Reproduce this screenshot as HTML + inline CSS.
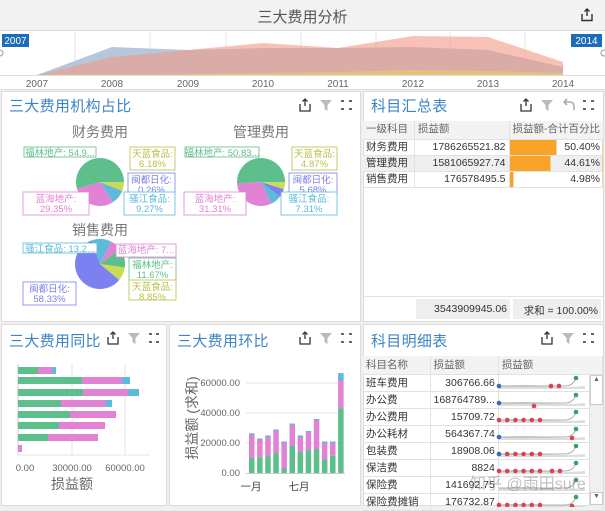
<!DOCTYPE html>
<html><head><meta charset="utf-8">
<style>
*{margin:0;padding:0;box-sizing:border-box}
body{width:605px;height:507px;overflow:hidden;background:#f0f0f0;font-family:"Liberation Sans","Noto Sans CJK SC",sans-serif;position:relative;color:#444}
.abs{position:absolute}
.panel{position:absolute;background:#fff;border:1px solid #dcdcdc}
.ttl{position:absolute;left:7px;top:3px;font-size:15px;color:#3d84c6;letter-spacing:0.3px;white-space:nowrap}
.tb{border-collapse:collapse;font-size:10.5px;position:absolute}
.tb td{height:16px;line-height:15px;border-bottom:1px solid #e2e2e2;border-right:1px solid #e2e2e2;padding:0 3px;white-space:nowrap;color:#333}
.tb.d td{height:17px;line-height:16px}
.tb tr.h td{background:#f3f3f3;color:#666;height:18px}
.r{text-align:right}
</style></head><body>
<div class="abs" style="left:0;top:0;width:605px;height:31px;background:#f2f2f2;border-bottom:1px solid #ddd"></div>
<div class="abs" style="left:0;top:6px;width:605px;text-align:center;font-size:15px;color:#555">三大费用分析</div>
<svg class="abs" style="left:580px;top:8px" width="14" height="14" viewBox="0 0 14 14"><path d="M7 1V8M4.5 3.5L7 1L9.5 3.5M2 6V12.5H12V6" fill="none" stroke="#333" stroke-width="1.4"/></svg>
<svg class="abs" style="left:0;top:31px" width="605" height="59" viewBox="0 31 605 59">
<rect x="0" y="31" width="605" height="59" fill="#fff"/>
<g stroke="#e6e6e6" stroke-width="1"><line x1="75" y1="32" x2="75" y2="75"/><line x1="150" y1="32" x2="150" y2="75"/><line x1="226" y1="32" x2="226" y2="75"/><line x1="301" y1="32" x2="301" y2="75"/><line x1="376" y1="32" x2="376" y2="75"/><line x1="450" y1="32" x2="450" y2="75"/><line x1="525" y1="32" x2="525" y2="75"/></g>
<polygon points="37,75 112,47 188,50 263,48 338,48 413,47 488,50 563,67 563,75" fill="#a9bdd6" opacity="0.85"/>
<polygon points="37,75 112,57 188,50 263,43 338,48 413,36 488,37 563,62 563,75" fill="#f29a84" opacity="0.6"/>
<polygon points="37,75 188,74 338,72 413,70 488,71 563,73 563,75" fill="#e5c870" opacity="0.8"/>
<line x1="0" y1="75.5" x2="605" y2="75.5" stroke="#ddd"/>
<line x1="0" y1="89.5" x2="605" y2="89.5" stroke="#ddd"/>
<circle cx="0" cy="53" r="3" fill="#fff" stroke="#999"/><circle cx="604" cy="53" r="3" fill="#fff" stroke="#999"/>
<g font-size="10" fill="#666" text-anchor="middle"><text x="37" y="87">2007</text><text x="112" y="87">2008</text><text x="188" y="87">2009</text><text x="263" y="87">2010</text><text x="338" y="87">2011</text><text x="413" y="87">2012</text><text x="488" y="87">2013</text><text x="563" y="87">2014</text></g>
<rect x="2" y="34" width="27" height="13" fill="#1d6cb8"/><text x="15.5" y="44" font-size="10" fill="#fff" text-anchor="middle">2007</text>
<rect x="571" y="34" width="31" height="13" fill="#1d6cb8"/><text x="586.5" y="44" font-size="10" fill="#fff" text-anchor="middle">2014</text>
</svg>

<div class="panel" style="left:1px;top:91px;width:360px;height:231px">
<div class="ttl">三大费用机构占比</div>
</div>
<svg class="abs" style="left:0;top:90px" width="362" height="232" viewBox="0 90 362 232" font-family="Liberation Sans,Noto Sans CJK SC,sans-serif">
<g fill="none" stroke="#333" stroke-width="1.3"><path d="M305 99V106M302.5 101.5L305 99L307.5 101.5M300 104V111H310V104"/></g>
<path d="M320 100H332L327.5 105V111L324.5 109V105Z" fill="#bbb"/>
<g fill="#666"><rect x="341" y="100" width="3" height="2"/><rect x="349" y="100" width="3" height="2"/><rect x="341" y="108" width="3" height="2"/><rect x="349" y="108" width="3" height="2"/></g>
<g font-size="14" fill="#777" text-anchor="middle"><text x="100" y="137">财务费用</text><text x="261" y="137">管理费用</text><text x="100" y="235">销售费用</text></g>
<g id="pies"></g>
<g font-size="9.5" text-anchor="middle" id="labels"></g>
</svg>

<div class="panel" style="left:363px;top:91px;width:241px;height:231px">
<div class="ttl">科目汇总表</div>
</div>
<svg class="abs" style="left:510px;top:96px" width="95" height="20" viewBox="510 96 95 20">
<path d="M526 99V106M523.5 101.5L526 99L528.5 101.5M521 104V111H531V104" fill="none" stroke="#333" stroke-width="1.3"/>
<path d="M541 100H553L548.5 105V111L545.5 109V105Z" fill="#bbb"/>
<path d="M564 102H570Q574 102 574 106.5V110M564 102L567 99M564 102L567 105" fill="none" stroke="#aaa" stroke-width="1.6"/>
<g fill="#666"><rect x="583" y="100" width="3" height="2"/><rect x="591" y="100" width="3" height="2"/><rect x="583" y="108" width="3" height="2"/><rect x="591" y="108" width="3" height="2"/></g>
</svg>
<table class="tb" style="left:363px;top:121px;width:241px">
<tr class="h"><td style="width:52px">一级科目</td><td style="width:98px">损益额</td><td>损益额-合计百分比</td></tr>
<tr><td>财务费用</td><td class="r">1786265521.82</td><td class="r" style="background:linear-gradient(90deg,#f9a328 0,#f9a328 47px,#fff 47px)">50.40%</td></tr>
<tr><td style="background:#efefef">管理费用</td><td class="r" style="background:#efefef">1581065927.74</td><td class="r" style="background:linear-gradient(90deg,#f9a328 0,#f9a328 41px,#efefef 41px)">44.61%</td></tr>
<tr><td>销售费用</td><td class="r">176578495.5</td><td class="r" style="background:linear-gradient(90deg,#f9a328 0,#f9a328 4px,#fff 4px)">4.98%</td></tr>
</table>
<div class="abs" style="left:363px;top:296px;width:241px;border-top:1px solid #e2e2e2"></div>
<div class="abs" style="left:416px;top:299px;width:94px;height:20px;background:#eee;font-size:10.5px;text-align:right;padding:4px 3px 0 0;color:#333">3543909945.06</div>
<div class="abs" style="left:513px;top:299px;width:88px;height:20px;background:#eee;font-size:10.5px;text-align:right;padding:4px 3px 0 0;color:#333">求和 = 100.00%</div>

<div class="panel" style="left:1px;top:324px;width:166px;height:182px">
<div class="ttl" style="top:5px">三大费用同比</div>
</div>
<div class="panel" style="left:169px;top:324px;width:192px;height:182px">
<div class="ttl" style="top:5px">三大费用环比</div>
</div>
<svg class="abs" style="left:0;top:322px" width="362" height="185" viewBox="0 322 362 185" font-family="Liberation Sans,Noto Sans CJK SC,sans-serif">
<g fill="none" stroke="#333" stroke-width="1.3"><path d="M113 332V339M110.5 334.5L113 332L115.5 334.5M108 337V344H118V337"/><path d="M305 332V339M302.5 334.5L305 332L307.5 334.5M300 337V344H310V337"/></g>
<path d="M128 333H140L135.5 338V344L132.5 342V338Z" fill="#bbb"/><path d="M320 333H332L327.5 338V344L324.5 342V338Z" fill="#bbb"/>
<g fill="#666"><rect x="149" y="333" width="3" height="2"/><rect x="156" y="333" width="3" height="2"/><rect x="149" y="341" width="3" height="2"/><rect x="156" y="341" width="3" height="2"/>
<rect x="341" y="333" width="3" height="2"/><rect x="349" y="333" width="3" height="2"/><rect x="341" y="341" width="3" height="2"/><rect x="349" y="341" width="3" height="2"/></g>
<g stroke="#e4e4e4"><line x1="72" y1="364" x2="72" y2="455"/><line x1="125" y1="364" x2="125" y2="455"/><line x1="18" y1="455" x2="150" y2="455"/></g>
<line x1="18" y1="364" x2="18" y2="455" stroke="#ccc"/>
<g id="hbars"></g>
<g font-size="9.5" fill="#666" text-anchor="middle"><text x="25" y="471">0.00</text><text x="72" y="471">30000.00</text><text x="125" y="471">60000.00</text></g>
<text x="72" y="489" font-size="14" fill="#666" text-anchor="middle">损益额</text>
<g stroke="#e4e4e4"><line x1="246" y1="383" x2="345" y2="383"/><line x1="246" y1="413" x2="345" y2="413"/><line x1="246" y1="443" x2="345" y2="443"/></g>
<line x1="246" y1="473.5" x2="345" y2="473.5" stroke="#ccc"/>
<g id="vbars"></g>
<g font-size="9.5" fill="#666" text-anchor="end"><text x="240" y="386">60000.00</text><text x="240" y="416">40000.00</text><text x="240" y="446">20000.00</text><text x="240" y="476">0.00</text></g>
<text transform="translate(197,418) rotate(-90)" font-size="14" fill="#666" text-anchor="middle">损益额 (求和)</text>
<g font-size="10.5" fill="#444" text-anchor="middle"><text x="251" y="490">一月</text><text x="299" y="490">七月</text></g>
</svg>

<div class="panel" style="left:363px;top:324px;width:241px;height:182px">
<div class="ttl" style="top:5px">科目明细表</div>
</div>
<svg class="abs" style="left:530px;top:328px" width="75" height="20" viewBox="530 328 75 20">
<path d="M547 332V339M544.5 334.5L547 332L549.5 334.5M542 337V344H552V337" fill="none" stroke="#333" stroke-width="1.3"/>
<path d="M562 333H574L569.5 338V344L566.5 342V338Z" fill="#bbb"/>
<g fill="#666"><rect x="583" y="333" width="3" height="2"/><rect x="591" y="333" width="3" height="2"/><rect x="583" y="341" width="3" height="2"/><rect x="591" y="341" width="3" height="2"/></g>
</svg>
<table class="tb d" style="left:363px;top:356px;width:240px">
<tr class="h"><td style="width:67px">科目名称</td><td style="width:65px">损益额</td><td>损益额</td></tr>
<tr><td>班车费用</td><td class="r">306766.66</td><td></td></tr>
<tr><td>办公费</td><td class="r">168764789...</td><td></td></tr>
<tr><td>办公费用</td><td class="r">15709.72</td><td></td></tr>
<tr><td>办公耗材</td><td class="r">564367.74</td><td></td></tr>
<tr><td>包装费</td><td class="r">18908.06</td><td></td></tr>
<tr><td>保洁费</td><td class="r">8824</td><td></td></tr>
<tr><td>保险费</td><td class="r">141692.75</td><td></td></tr>
<tr><td>保险费摊销</td><td class="r">176732.87</td><td></td></tr>
</table>
<div class="abs" style="left:589px;top:375px;width:14px;height:131px;background:#f0f0f0;border-left:1px solid #ddd"></div>
<div class="abs" style="left:590px;top:375px;width:13px;height:30px;background:#fff;border:1px solid #ccc;font-size:7px;text-align:center;color:#666">▲</div>
<div class="abs" style="left:590px;top:492px;width:13px;height:13px;background:#fff;border:1px solid #ccc;font-size:7px;text-align:center;color:#666">▼</div>
<svg class="abs" style="left:495px;top:375px" width="95" height="132" id="spark"></svg>
<div class="abs" style="left:470px;top:470px;font-size:16px;color:rgba(120,120,120,0.45);white-space:nowrap">知乎 @雨田sure</div>

<script>
var NS="http://www.w3.org/2000/svg";
function el(p,t,a,txt){var e=document.createElementNS(NS,t);for(var k in a)e.setAttribute(k,a[k]);if(txt)e.textContent=txt;p.appendChild(e);return e;}
var G="#5dbf8b",P="#e182d4",C="#5ebadb",B="#7d80f0",Y="#c9dc55";
var pies=document.getElementById("pies");
function pie(cx,cy,r,start,parts){var a=start*Math.PI/180;parts.forEach(function(p){var b=a+p[0]/100*2*Math.PI;var x1=cx+r*Math.cos(a),y1=cy+r*Math.sin(a),x2=cx+r*Math.cos(b),y2=cy+r*Math.sin(b);el(pies,"path",{d:"M"+cx+" "+cy+"L"+x1+" "+y1+"A"+r+" "+r+" 0 "+(b-a>Math.PI?1:0)+" 1 "+x2+" "+y2+"Z",fill:p[1]});a=b;});}
pie(100,182,24,0,[[6.18,Y],[0.6,B],[9.27,C],[29.35,P],[54.6,G]]);
pie(261,182,24,0,[[4.87,Y],[5.68,B],[7.31,C],[31.31,P],[50.83,G]]);
pie(100,264,25,8,[[8.85,Y],[58.33,B],[13.2,C],[7,P],[12.62,G]]);
var lb=document.getElementById("labels");
function lab(x,y,w,h,c,l1,l2){el(lb,"rect",{x:x,y:y,width:w,height:h,fill:"#fff",stroke:c,"stroke-width":0.8});el(lb,"text",{x:x+w/2,y:y+(l2?10:9),fill:c},l1);if(l2)el(lb,"text",{x:x+w/2,y:y+20,fill:c},l2);}
lab(24,147,72,10,G,"福林地产: 54.9...");lab(130,147,45,23,"#b8c14a","天蓝食品:","6.18%");
lab(128,173,47,21,B,"闽都日化:","0.26%");lab(124,192,51,23,C,"骚江食品:","9.27%");
lab(23,192,66,23,P,"蓝海地产:","29.35%");
lab(185,147,74,10,G,"福林地产: 50.83...");lab(292,147,45,23,"#b8c14a","天蓝食品:","4.87%");
lab(289,173,48,21,B,"闽都日化:","5.68%");lab(281,192,56,23,C,"骚江食品:","7.31%");
lab(184,192,62,23,P,"蓝海地产:","31.31%");
lab(23,243,74,10,C,"骚江食品: 13.2...");lab(116,244,60,13,P,"蓝海地产: 7...");
lab(129,258,47,23,G,"福林地产:","11.67%");lab(129,280,47,20,"#b8c14a","天蓝食品:","8.85%");
lab(23,282,53,23,B,"闽都日化:","58.33%");
var hb=document.getElementById("hbars");
[[370,38,52,56],[380,82,122,130],[392,83,128,139],[403,61,106,112],[414,70,116,116],[425,59,105,105],[437,48,98,98],[448,18,22,22]].forEach(function(b){var y=b[0]-3;
el(hb,"rect",{x:18,y:y,width:b[1]-18,height:7,fill:G});el(hb,"rect",{x:b[1],y:y,width:b[2]-b[1],height:7,fill:P});if(b[3]>b[2])el(hb,"rect",{x:b[2],y:y,width:b[3]-b[2],height:7,fill:C});});
var vb=document.getElementById("vbars");
[[26.5,10],[23,10.5],[25,11],[29,13],[21,3],[33,18],[25,14],[28,15],[36,16],[21,9],[21,11.5],[66.5,43]].forEach(function(v,i){var x=249+i*8.1,w=5.5;
var yg=473-v[1]*1.5,yt=473-v[0]*1.5;
el(vb,"rect",{x:x,y:yt,width:w,height:2,fill:C});el(vb,"rect",{x:x,y:yt+1.5,width:w,height:yg-yt-1.5,fill:P});el(vb,"rect",{x:x,y:yg,width:w,height:473-yg,fill:G});if(i==11)el(vb,"rect",{x:x,y:yt,width:w,height:7,fill:C});});
var sp=document.getElementById("spark");
var R="#d9434f",Bl="#2d6fb3",Gr="#3f9c66";
for(var r=0;r<8;r++){var cy=11+r*17;
el(sp,"path",{d:"M4 "+cy+"Q30 "+(cy-2)+" 50 "+cy+"T90 "+cy+"L90 "+(cy+3)+"L4 "+(cy+3)+"Z",fill:"#ddd"});
el(sp,"path",{d:"M4 "+cy+"L70 "+cy+"Q78 "+cy+" 81 "+(cy-8),stroke:"#999","stroke-width":0.8,fill:"none"});
el(sp,"circle",{cx:81,cy:cy-8,r:2.3,fill:Gr});
if(r==0||r==1||r==3||r==4){el(sp,"circle",{cx:4,cy:cy,r:2.3,fill:Bl});}
if(r==2||r==5||r==7||r==4){for(var k=(r==4?1:0);k<6;k++)el(sp,"circle",{cx:4+k*8.2,cy:cy,r:2.3,fill:R});}
if(r==0){el(sp,"circle",{cx:56,cy:cy,r:2.3,fill:R});el(sp,"circle",{cx:64,cy:cy,r:2.3,fill:R});}
if(r==1)el(sp,"circle",{cx:39,cy:cy+3,r:2.3,fill:R});
if(r==3||r==7)el(sp,"circle",{cx:77,cy:cy+1,r:2.3,fill:R});
if(r==5){el(sp,"circle",{cx:57,cy:cy,r:2.3,fill:R});el(sp,"circle",{cx:65,cy:cy,r:2.3,fill:R});}
}
</script>
</body></html>
